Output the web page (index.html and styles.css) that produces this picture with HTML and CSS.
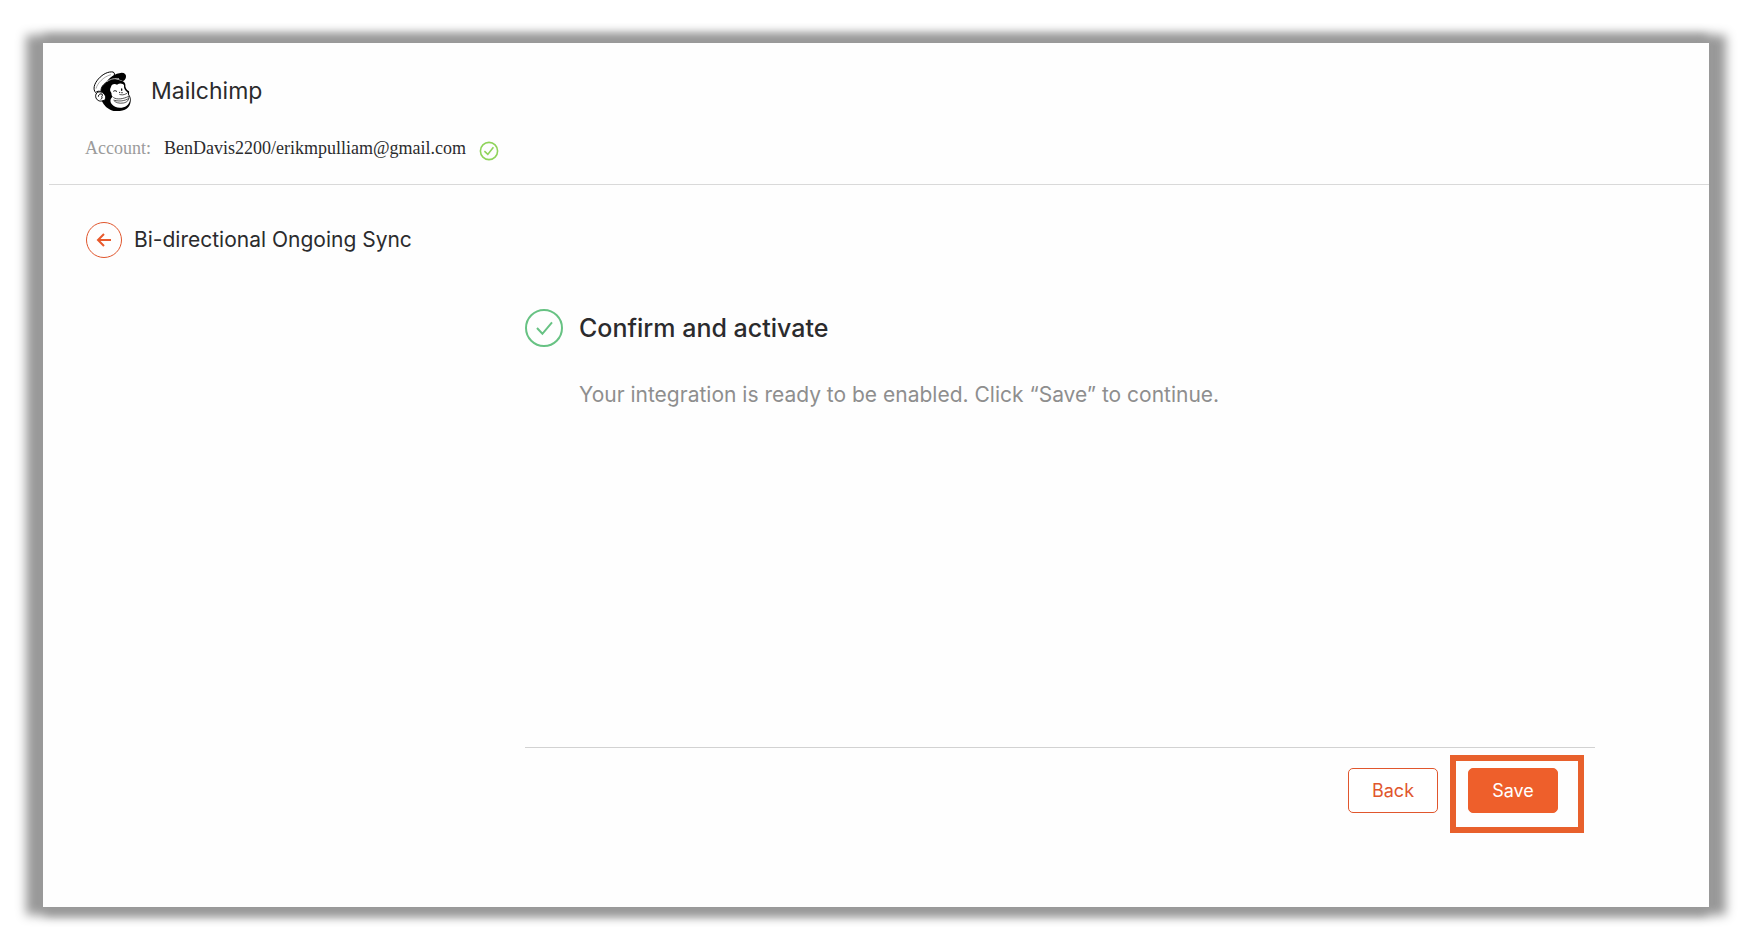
FILE: index.html
```
<!DOCTYPE html>
<html lang="en">
<head>
  <meta charset="UTF-8">
  <meta name="viewport" content="width=device-width, initial-scale=1.0">
  <title>Mailchimp - Bi-directional Ongoing Sync</title>
  <link rel="stylesheet" href="styles.css">
</head>
<body>

  <div class="card">
    <header class="header">
      <div class="brand">
        <svg class="logo" viewBox="37 31 114 120" aria-hidden="true">
          <!-- head -->
          <path d="M60 76 C66 62 84 54 104 56 L124 60 C133 64 135 70 134 77 C136 86 140 90 145 92 C146 97 144 100 146 104 C152 110 152 128 144 138 C134 150 114 154 96 150 C80 146 70 134 64 122 Z" fill="#000"/>
          <!-- cap -->
          <path d="M45 96 C36 86 40 70 53 55 C67 39 84 32 97 34 C103 36 102 43 99 48 L76 66 C64 74 60 84 61 94 C56 90 49 91 45 96 Z" fill="#fff" stroke="#000" stroke-width="3" stroke-linejoin="round"/>
          <path d="M46 84 C50 68 68 48 91 42" fill="none" stroke="#000" stroke-width="1"/>
          <path d="M77 66 C84 50 104 38 123 36 C132 36 137 41 136 49 C135 56 131 61 126 61 C113 53 95 54 77 66 Z" fill="#000"/>
          <path d="M79 63 C91 54 104 52 115 54" fill="none" stroke="#fff" stroke-width="2"/>
          <!-- face -->
          <path d="M91 79 C92 71 101 68 109 72 C117 66 128 68 130 74 C129 84 133 89 140 95 C143 99 141 102 145 106 C151 115 148 128 138 135 C124 145 101 142 93 130 C87 122 89 113 96 108 C91 104 94 99 91 95 C87 90 88 84 91 79 Z" fill="#fff"/>
          <path d="M98 92 C102 89 106 90 109 93" fill="none" stroke="#000" stroke-width="3"/>
          <ellipse cx="123" cy="87" rx="2" ry="4" fill="#000"/>
          <path d="M116 101 C122 103 129 104 139 98" fill="none" stroke="#000" stroke-width="2"/>
          <circle cx="117" cy="95" r="2" fill="#000"/>
          <circle cx="124" cy="96" r="2" fill="#000"/>
          <path d="M99 111 C108 118 128 115 144 107 C147 118 139 125 128 127 C115 129 104 126 99 119 M102 119 C116 123 132 121 143 114" fill="none" stroke="#000" stroke-width="2" stroke-linecap="round"/>
          <!-- ear -->
          <path d="M68 98 C60 90 47 93 45 104 C44 115 53 123 63 121 L72 119 C77 111 75 103 68 98 Z" fill="#fff" stroke="#000" stroke-width="3"/>
          <path d="M53 108 C53 99 64 97 66 103 C65 106 62 106 64 110 C65 113 62 115 60 116" fill="none" stroke="#000" stroke-width="3"/>
        </svg>
        <h1 class="brand-name">Mailchimp</h1>
      </div>
      <div class="account">
        <span class="account-label">Account:</span>
        <span class="account-name">BenDavis2200/erikmpulliam@gmail.com</span>
        <svg class="account-check" viewBox="0 0 20 20" aria-hidden="true">
          <circle cx="10" cy="10" r="8.6"/>
          <path d="M5.4 10.2 L8.8 13.4 L14.4 6.2"/>
        </svg>
      </div>
    </header>

    <main class="content">
      <div class="title-row">
        <button type="button" class="round-button" aria-label="Go back">
          <svg class="arrow" viewBox="0 0 16 16" aria-hidden="true">
            <path d="M15 8 H2 M8 2 L2 8 L8 14"/>
          </svg>
        </button>
        <h2 class="title">Bi-directional Ongoing Sync</h2>
      </div>

      <section class="step">
        <svg class="step-check" viewBox="0 0 38 38" aria-hidden="true">
          <circle cx="19" cy="19" r="18"/>
          <path d="M12 19 L17.4 24.8 L27 13.4"/>
        </svg>
        <div class="step-body">
          <h3 class="step-title">Confirm and activate</h3>
          <p class="step-text">Your integration is ready to be enabled. Click “Save” to continue.</p>
        </div>
      </section>

      <footer class="actions">
        <button type="button" class="button">Back</button>
        <div class="highlight">
          <button type="button" class="button button-primary">Save</button>
        </div>
      </footer>
    </main>
  </div>

</body>
</html>
```

FILE: styles.css
```
* {
  box-sizing: border-box;
}
body {
  margin: 0;
  padding: 43px 51px 35px 43px;
  min-height: 100vh;
  display: flex;
  background-color: #fff;
  color: #2b2b2d;
  font-family: Inter, "Liberation Sans", sans-serif;
}
h1, h2, h3, p {
  margin: 0;
  font-weight: 400;
}
.card {
  flex: 1;
  background-color: #fefefe;
  box-shadow: -9px 0 10px 8px #999, 9px 0 10px 8px #999;
}
.header {
  margin-left: 6px;
  padding: 26px 36px 22px;
  border-bottom: 1px solid #d9d9d9;
}
.brand {
  display: flex;
  align-items: center;
  gap: 20px;
  padding-left: 8px;
}
.logo {
  width: 38px;
  height: 40px;
}
.brand-name {
  font-size: 23px;
  line-height: 44px;
}
.account {
  display: flex;
  align-items: center;
  gap: 13px;
  margin-top: 21px;
  font-family: "Liberation Serif", serif;
  font-size: 18px;
  line-height: 28px;
}
.account-label {
  color: #9b9b9b;
}
.account-check {
  width: 20px;
  height: 20px;
  margin-top: 6px;
  fill: none;
  stroke: #8fd35a;
  stroke-width: 1.6;
}
.content {
  padding: 37px 114px 74px 43px;
}
.title-row {
  display: flex;
  align-items: center;
  gap: 12px;
}
.round-button {
  display: flex;
  align-items: center;
  justify-content: center;
  width: 36px;
  height: 36px;
  padding: 0;
  border: 1px solid #e0562d;
  border-radius: 50%;
  background-color: transparent;
  cursor: pointer;
}
.arrow {
  width: 16px;
  height: 16px;
  fill: none;
  stroke: #e8592b;
  stroke-width: 2;
}
.title {
  font-size: 21px;
  line-height: 36px;
}
.step {
  display: flex;
  gap: 16px;
  min-height: 438px;
  margin: 51px 0 0 439px;
}
.step-check {
  width: 38px;
  height: 38px;
  fill: none;
  stroke: #67c283;
  stroke-width: 2;
}
.step-title {
  font-size: 25px;
  font-weight: 500;
  line-height: 38px;
}
.step-text {
  margin-top: 30px;
  color: #8e8e8e;
  font-size: 21px;
  line-height: 36px;
}
.actions {
  display: flex;
  justify-content: flex-end;
  gap: 30px;
  margin-left: 439px;
  padding: 20px 37px 0 0;
  border-top: 1px solid #d2d2d2;
}
.button {
  min-width: 90px;
  height: 45px;
  padding: 0 22px;
  border: 1px solid #e0562d;
  border-radius: 5px;
  background-color: #fff;
  color: #e0562d;
  font-family: inherit;
  font-size: 18px;
  cursor: pointer;
}
.button-primary {
  border-color: #ee5f2b;
  background-color: #ee5f2b;
  color: #fff;
}
.highlight {
  position: relative;
}
.highlight::after {
  content: "";
  position: absolute;
  inset: -13px -26px -20px -18px;
  border: 6px solid #e8602c;
  pointer-events: none;
}
```
